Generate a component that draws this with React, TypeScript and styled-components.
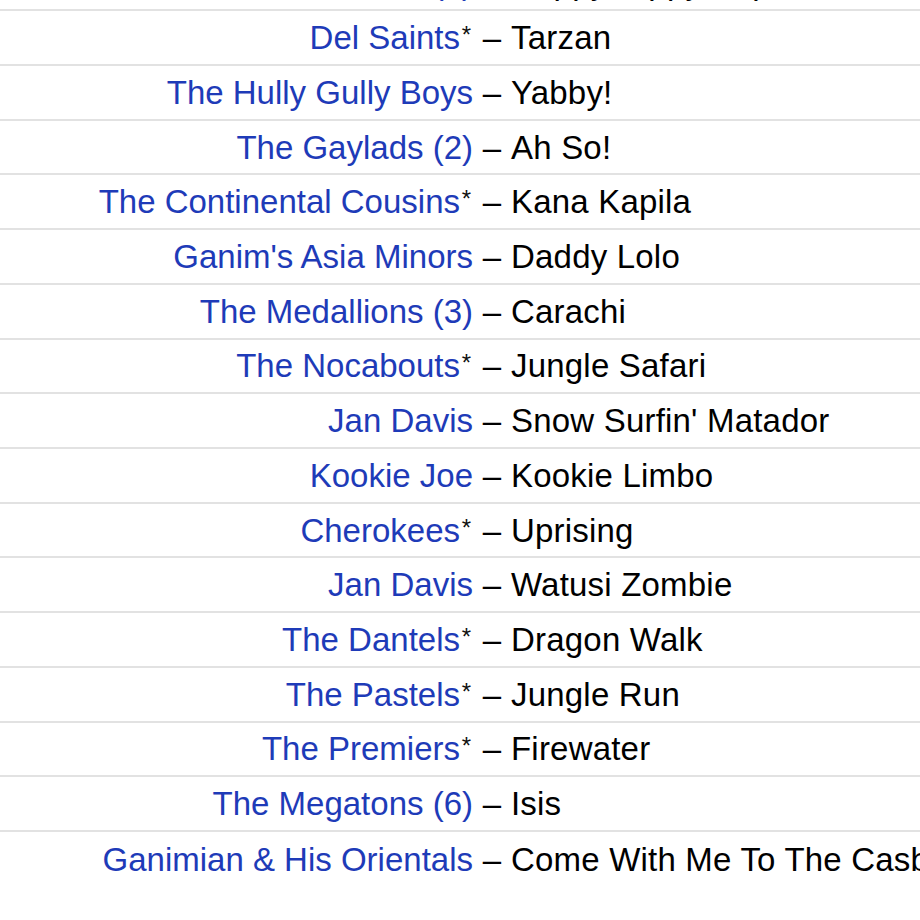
import styled, { createGlobalStyle } from "styled-components";

const GlobalStyle = createGlobalStyle`
  html, body {
    margin: 0;
    padding: 0;
    background: #ffffff;
    overflow: hidden;
  }
  body {
    font-family: "Liberation Sans", Arial, Helvetica, sans-serif;
  }
`;

type Track = {
  artist: string;
  anv?: boolean;
  title: string;
};

const tracks: Track[] = [
  { artist: "The Sandals (5)", title: "Happy Hippy Pop" },
  { artist: "Del Saints", anv: true, title: "Tarzan" },
  { artist: "The Hully Gully Boys", title: "Yabby!" },
  { artist: "The Gaylads (2)", title: "Ah So!" },
  { artist: "The Continental Cousins", anv: true, title: "Kana Kapila" },
  { artist: "Ganim's Asia Minors", title: "Daddy Lolo" },
  { artist: "The Medallions (3)", title: "Carachi" },
  { artist: "The Nocabouts", anv: true, title: "Jungle Safari" },
  { artist: "Jan Davis", title: "Snow Surfin' Matador" },
  { artist: "Kookie Joe", title: "Kookie Limbo" },
  { artist: "Cherokees", anv: true, title: "Uprising" },
  { artist: "Jan Davis", title: "Watusi Zombie" },
  { artist: "The Dantels", anv: true, title: "Dragon Walk" },
  { artist: "The Pastels", anv: true, title: "Jungle Run" },
  { artist: "The Premiers", anv: true, title: "Firewater" },
  { artist: "The Megatons (6)", title: "Isis" },
  { artist: "Ganimian & His Orientals", title: "Come With Me To The Casbah" },
];

export default function App() {
  return (
    <>
      <GlobalStyle />
      <TrackList>
        {tracks.map((t, i) => (
          <TrackRow key={i} $last={i === tracks.length - 1}>
            <Artist>
              <ArtistLink href="#">{t.artist}</ArtistLink>
              {t.anv && <Star>*</Star>}
            </Artist>
            <Dash>–</Dash>
            <Title>{t.title}</Title>
          </TrackRow>
        ))}
      </TrackList>
    </>
  );
}

const TrackList = styled.div`
  margin-top: -43.5px;
  width: 920px;
`;

const TrackRow = styled.div<{ $last?: boolean }>`
  display: grid;
  grid-template-columns: 473px 38px 1fr;
  align-items: center;
  height: 54.73px;
  box-sizing: border-box;
  border-bottom: ${(p) => (p.$last ? "none" : "2.5px solid #e2e2e2")};
  font-size: 33px;
  line-height: 1;
  color: #000;
  white-space: nowrap;
`;

const Artist = styled.div`
  text-align: right;
`;

const ArtistLink = styled.a`
  color: #1e3bb8;
  text-decoration: none;
`;

const Star = styled.span`
  display: inline-block;
  width: 13px;
  text-align: center;
  font-size: 24px;
  vertical-align: 6px;
  color: #111;
`;

const Dash = styled.span`
  text-align: center;
`;

const Title = styled.span`
  letter-spacing: 0.2px;
`;
